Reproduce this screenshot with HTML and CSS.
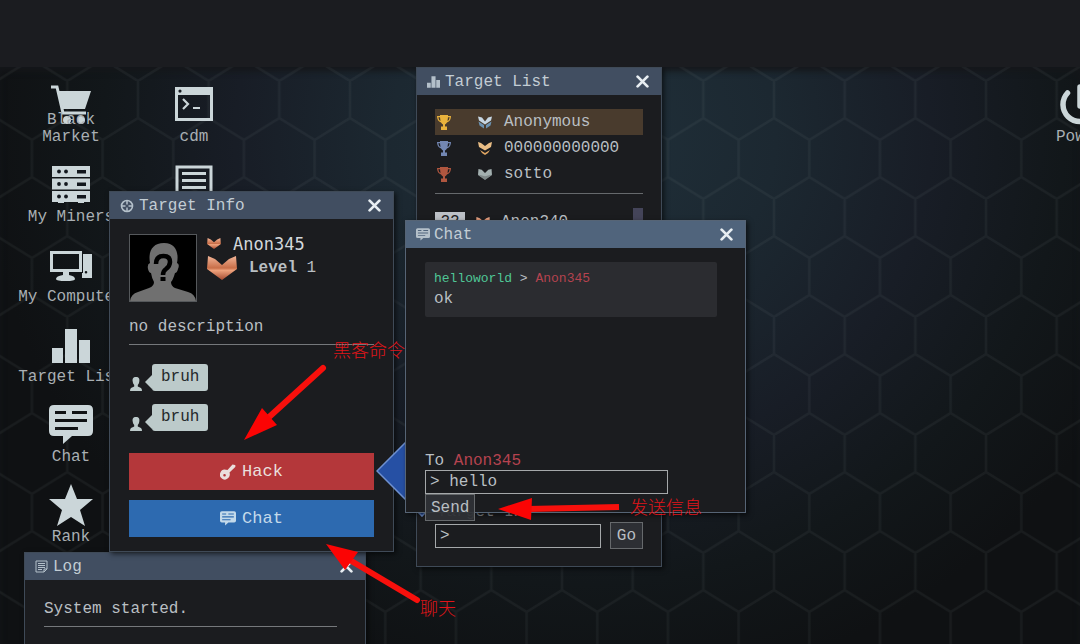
FILE: index.html
```html
<!DOCTYPE html>
<html lang="en">
<head>
	<meta charset="utf-8">
	<title>Desktop</title>
	<link rel="stylesheet" href="styles.css">
</head>
<body>
	<svg class="sprite" aria-hidden="true">
		<linearGradient id="copper" x1="0" y1="0" x2="0" y2="1">
			<stop offset="0" stop-color="#f2b497"/>
			<stop offset="0.5" stop-color="#c96f49"/>
			<stop offset="0.6" stop-color="#efa27c"/>
			<stop offset="1" stop-color="#a44a30"/>
		</linearGradient>
		<symbol id="i-chat" viewBox="0 0 44 40">
			<path fill="currentColor" fill-rule="evenodd" d="M5 0H39Q44 0 44 5V26Q44 31 39 31H23L14 39V31H5Q0 31 0 26V5Q0 0 5 0ZM6 6V9H17V6ZM23 6V9H38V6ZM6 14V17H38V14ZM6 22V25H29V22Z"/>
		</symbol>
		<symbol id="i-bars" viewBox="0 0 38 34">
			<path fill="currentColor" d="M0 19H11V34H0ZM13 0H25V34H13ZM27 11H38V34H27Z"/>
		</symbol>
		<symbol id="i-aim" viewBox="0 0 14 14">
			<g fill="none" stroke="currentColor"><circle cx="7" cy="7" r="5.500" stroke-width="1.600"/><path d="M7 1V5.500M7 8.500V13M1 7H5.500M8.500 7H13" stroke-width="1.500"/></g>
		</symbol>
		<symbol id="i-log" viewBox="0 0 13 13">
			<path fill="none" stroke="currentColor" d="M1 1H12V9L9 12H1ZM12 9H9V12M3 3.500H10M3 5.500H10M3 7.500H10M3 9.500H7"/>
		</symbol>
		<symbol id="i-close" viewBox="0 0 12 12">
			<path d="M1.500 1.500L10.500 10.500M10.500 1.500L1.500 10.500" stroke="currentColor" stroke-width="2.500" stroke-linecap="round"/>
		</symbol>
		<symbol id="i-user" viewBox="0 0 12 14">
			<path fill="currentColor" d="M6 0C9 0 9.800 2 9.300 4.500C9 6.500 8.500 7 7.800 8V9.500L11 11Q12 12 12 14H0Q0 12 1 11L4.200 9.500V8C3.500 7 3 6.500 2.700 4.500C2.200 2 3 0 6 0Z"/>
		</symbol>
		<symbol id="i-key" viewBox="0 0 16 16">
			<path fill="currentColor" fill-rule="evenodd" d="M12.500 0.500L15 1Q16 2 15 3.200L9.500 8.500Q10.500 11.500 8.500 13.800A4.900 4.900 0 1 1 6 5.800L7.500 6ZM4.500 10A1.300 1.300 0 1 0 4.600 12.600A1.300 1.300 0 1 0 4.500 10Z"/>
		</symbol>
		<symbol id="i-cup" viewBox="0 0 14 15">
			<path fill="currentColor" d="M3 0H11V1H14Q14 6 10 7.500Q9 9 8 9.500V11.500H10V15H4V11.500H6V9.500Q5 9 4 7.500Q0 6 0 1H3ZM1.300 2.300Q1.500 5 3.500 6L3 2.300ZM12.700 2.300H11L10.500 6Q12.500 5 12.700 2.300Z"/>
		</symbol>
		<symbol id="i-mask" viewBox="0 0 30 24">
			<path fill="currentColor" d="M1 0L8 2L15 9L22 2L29 0L30 13L15 24L0 13Z"/>
			<path fill="#000" fill-opacity="0.22" d="M0 12L15 16L30 12L15 24Z"/>
		</symbol>
		<symbol id="i-copper" viewBox="0 0 30 24">
			<path fill="url(#copper)" d="M1 0L8 3L15 9L22 3L29 0L30 13L15 24L0 13Z"/>
		</symbol>
		<symbol id="i-wings" viewBox="0 0 14 12">
			<path fill="#c7d7e4" d="M0 0L4 1L7 5L10 1L14 0L13 4L7 8L1 4Z"/>
			<path fill="#6c93b3" d="M0.500 5L6 8.500V12L1.500 9ZM13.500 5L8 8.500V12L12.500 9Z"/>
		</symbol>
		<symbol id="i-gold" viewBox="0 0 14 13">
			<path fill="#e9bd85" d="M0 0L3 1L7 4L11 1L14 0L13 5L7 8.500L1 5Z"/>
			<path fill="#e0a663" d="M2 8L7 11L12 8L10 11L7 13L4 11Z"/>
		</symbol>
	</svg>

	<header class="topbar"></header>

	<main class="desktop">
		<svg class="wallpaper" aria-hidden="true">
			<defs>
				<pattern id="hex" x="67.3" y="14" width="70.67" height="118" patternUnits="userSpaceOnUse">
					<path d="M0 0V37L35.300 59V96L0 118M35.300 96L70.670 118M35.300 59L70.670 37V0" fill="none" stroke="#8a9499" stroke-opacity="0.08" stroke-width="2.500"/>
				</pattern>
			</defs>
			<rect width="100%" height="100%" fill="url(#hex)"/>
		</svg>

		<nav class="shortcuts">
			<a class="shortcut" href="#market">
				<svg width="40" height="40" viewBox="0 0 40 40"><path d="M0 3H6L12 29H35" fill="none" stroke="currentColor" stroke-width="3"/><path fill="currentColor" d="M7 7H40L34 25H12Z"/><circle cx="16" cy="36" r="4" fill="currentColor"/><circle cx="30" cy="36" r="4" fill="currentColor"/></svg>
				<span>Black Market</span>
			</a>
			<a class="shortcut" href="#cdm">
				<svg width="38" height="40" viewBox="0 0 38 40"><path fill="currentColor" fill-rule="evenodd" d="M0 3H38V37H0ZM3 11V34H35V11ZM5 5.500A1.600 1.600 0 1 0 5 8.700A1.600 1.600 0 1 0 5 5.500Z"/><path d="M8 15L13 20L8 25M18 24H25" fill="none" stroke="currentColor" stroke-width="2.200"/></svg>
				<span>cdm</span>
			</a>
			<a class="shortcut" href="#miners">
				<svg width="38" height="40" viewBox="0 0 38 40"><path fill="currentColor" d="M0 2H38V13H0ZM0 14.500H38V25.500H0ZM0 27H38V38H32V39H26V38H12V39H6V38H0Z"/><g fill="#12171d"><circle cx="7" cy="7.500" r="1.900"/><circle cx="14" cy="7.500" r="1.900"/><path d="M25 6H34V9.500H25ZM25 18.500H34V22H25ZM25 31H34V34.500H25Z"/><circle cx="7" cy="20" r="1.900"/><circle cx="14" cy="20" r="1.900"/><circle cx="7" cy="32.500" r="1.900"/><circle cx="14" cy="32.500" r="1.900"/></g></svg>
				<span>My Miners</span>
			</a>
			<a class="shortcut" href="#log">
				<svg width="38" height="40" viewBox="0 0 38 40"><path d="M2 3H36V37H2ZM7 9.500H31M7 16.500H31M7 23.500H31M7 30H22" fill="none" stroke="currentColor" stroke-width="3"/></svg>
				<span>Log</span>
			</a>
			<a class="shortcut" href="#computer">
				<svg width="44" height="40" viewBox="0 0 44 40"><path fill="currentColor" fill-rule="evenodd" d="M1 7H33V28H20V31Q26 32 26 35Q26 37 17 37Q7 37 7 35Q7 32 14 31V28H1ZM4 10V25H30V10ZM34 10H43V34H33V29H34ZM37 27A1.300 1.300 0 1 0 37 29.600A1.300 1.300 0 1 0 37 27Z"/></svg>
				<span>My Computer</span>
			</a>
			<a class="shortcut row-start" href="#targets">
				<svg width="38" height="40" viewBox="0 -5 38 40"><use href="#i-bars" width="38" height="34"/></svg>
				<span>Target List</span>
			</a>
			<a class="shortcut row-start" href="#chat">
				<svg width="44" height="40" viewBox="0 -1 44 40"><use href="#i-chat" width="44" height="40"/></svg>
				<span>Chat</span>
			</a>
			<a class="shortcut row-start" href="#rank">
				<svg width="44" height="42" viewBox="0 0 44 42"><path fill="currentColor" d="M22 0L28 15H44L31 26L36 42L22 33L8 42L13 26L0 15H16Z"/></svg>
				<span>Rank</span>
			</a>
		</nav>

		<a class="shortcut power" href="#power">
			<svg width="42" height="42" viewBox="0 0 42 42"><path d="M8.500 9A17 17 0 1 0 33.500 9M21 3V22" fill="none" stroke="currentColor" stroke-width="5.500" stroke-linecap="round"/></svg>
			<span>Power</span>
		</a>

		<section class="window targets">
			<div class="titlebar">
				<svg width="13" height="12"><use href="#i-bars"/></svg>
				<h2>Target List</h2>
				<button class="close" type="button" aria-label="Close"><svg width="13" height="13"><use href="#i-close"/></svg></button>
			</div>
			<div class="content">
				<ol class="podium">
					<li class="first"><svg class="gold" width="14" height="15"><use href="#i-cup"/></svg><svg width="14" height="13"><use href="#i-wings"/></svg><span>Anonymous</span></li>
					<li><svg class="silver" width="14" height="15"><use href="#i-cup"/></svg><svg width="14" height="13"><use href="#i-gold"/></svg><span>000000000000</span></li>
					<li><svg class="bronze" width="14" height="15"><use href="#i-cup"/></svg><svg class="steel" width="14" height="13"><use href="#i-mask"/></svg><span>sotto</span></li>
				</ol>
				<div class="ranking">
					<ul>
						<li><span class="level">22</span><svg width="14" height="13"><use href="#i-copper"/></svg><span>Anon340</span></li>
					</ul>
					<div class="scroll"></div>
				</div>
				<form>
					<label for="target">Target IP</label>
					<div class="field">
						<input id="target" type="text" value="&gt;">
						<button class="small" type="button">Go</button>
					</div>
				</form>
			</div>
		</section>

		<section class="window log">
			<div class="titlebar">
				<svg width="13" height="13"><use href="#i-log"/></svg>
				<h2>Log</h2>
				<button class="close" type="button" aria-label="Close"><svg width="13" height="13"><use href="#i-close"/></svg></button>
			</div>
			<div class="content">
				<p>System started.</p>
			</div>
		</section>

		<section class="window info">
			<div class="titlebar">
				<svg width="14" height="14"><use href="#i-aim"/></svg>
				<h2>Target Info</h2>
				<button class="close" type="button" aria-label="Close"><svg width="13" height="13"><use href="#i-close"/></svg></button>
			</div>
			<div class="content">
				<div class="profile">
					<svg class="avatar" viewBox="0 0 66 66" role="img" aria-label="Avatar">
						<path fill="#707070" d="M34 8C46 8 49 18 47 28Q50 29 48 34Q47 38 45 38Q43 45 41 47Q41 51 45 53L58 57Q65 59 66 66H0Q1 59 8 57L19 53Q24 51 24 47Q22 44 21 38Q19 38 18 34Q17 29 20 28C18 17 22 8 34 8Z"/>
						<path fill="none" stroke="#000" stroke-width="4.500" d="M26 29Q26 21 33.500 21Q40 21 40 27Q40 31 36 34Q33 36 33 40"/>
						<rect x="30.500" y="42" width="5" height="4"/>
					</svg>
					<div class="who">
						<div class="name"><svg width="14" height="11"><use href="#i-copper"/></svg><b>Anon345</b></div>
						<div class="rank"><svg width="30" height="24"><use href="#i-copper"/></svg><span><b>Level</b> 1</span></div>
					</div>
				</div>
				<p>no description</p>
				<div class="bubbles">
					<div class="bubble"><svg width="12" height="14"><use href="#i-user"/></svg><span>bruh</span></div>
					<div class="bubble"><svg width="12" height="14"><use href="#i-user"/></svg><span>bruh</span></div>
				</div>
				<div class="actions">
					<button class="hack" type="button"><svg width="16" height="16"><use href="#i-key"/></svg>Hack</button>
					<button class="talk" type="button"><svg width="16" height="15"><use href="#i-chat"/></svg>Chat</button>
				</div>
			</div>
		</section>

		<svg class="pointer" width="92" height="92" aria-hidden="true"><path d="M1 46L46 1L91 46L46 91Z" fill="#2650a4" stroke="#6f90cf" stroke-width="1.500"/></svg>

		<section class="window chat">
			<div class="titlebar">
				<svg width="14" height="13"><use href="#i-chat"/></svg>
				<h2>Chat</h2>
				<button class="close" type="button" aria-label="Close"><svg width="13" height="13"><use href="#i-close"/></svg></button>
			</div>
			<div class="content">
				<div class="messages">
					<div class="message">
						<div class="meta"><span class="from">helloworld</span> &gt; <span class="to">Anon345</span></div>
						<div>ok</div>
					</div>
				</div>
				<form>
					<label for="message">To <span class="to">Anon345</span></label>
					<input id="message" type="text" value="&gt; hello">
					<button class="small" type="button">Send</button>
				</form>
			</div>
		</section>

		<svg class="arrows" aria-hidden="true">
			<g fill="none" stroke="#f8100c" stroke-width="6" stroke-linecap="round">
				<path d="M323 301L268 351"/>
				<path d="M619 440L528 442" stroke-linecap="butt"/>
				<path d="M417 533L348 492"/>
			</g>
			<path fill="#fb0404" d="M244 373L262 341L277 358ZM498 442L532 431L531 453ZM326 477L358 485L345 503Z"/>
		</svg>
		<span class="note note-hack" lang="zh">黑客命令</span>
		<span class="note note-send" lang="zh">发送信息</span>
		<span class="note note-chat" lang="zh">聊天</span>
	</main>
</body>
</html>
```
FILE: styles.css
```css
*{
	box-sizing: border-box;
}
body{
	margin: 0;
	min-height: 100vh;
	display: flex;
	flex-direction: column;
	background-color: #1b1c20;
	color: #b9bfc3;
	font-family: "Liberation Mono", "Noto Sans CJK SC", monospace;
	font-size: 16px;
	line-height: 20px;
}
svg{
	flex: none;
	display: block;
}
h2, p, ol, ul{
	margin: 0;
	padding: 0;
	font-size: 16px;
	font-weight: normal;
	list-style: none;
}
button, input{
	font: inherit;
	color: inherit;
	margin: 0;
	border-radius: 0;
}
.sprite{
	position: absolute;
	width: 0;
	height: 0;
}
.topbar{
	height: 67px;
}
.desktop{
	position: relative;
	flex: 1;
	overflow: hidden;
	background: radial-gradient(ellipse 600px 560px at 54% 12%, #20303a 0%, #1c2831 32%, #181d26 58%, #12171a 80%, #0f1113 100%);
	box-shadow: inset 0 4px 6px #15171a;
}
.wallpaper, .arrows{
	position: absolute;
	top: 0;
	left: 0;
	width: 100%;
	height: 100%;
	pointer-events: none;
}

/* desktop icons */
.shortcuts{
	position: relative;
	display: grid;
	grid-template-columns: 106px 106px;
	grid-auto-rows: 62px;
	gap: 18px 17px;
	padding: 17px 18px;
}
.shortcut{
	display: grid;
	justify-items: center;
	height: 62px;
	color: #cbd6d9;
	text-decoration: none;
	text-align: center;
	line-height: 17px;
}
.shortcut svg, .shortcut span{
	grid-area: 1 / 1;
}
.shortcut span{
	align-self: end;
	color: #a9afb3;
}
.row-start{
	grid-column: 1;
}
.power{
	position: absolute;
	top: 17px;
	right: -53px;
	width: 106px;
}

/* windows */
.window{
	position: absolute;
	display: flex;
	flex-direction: column;
	background-color: #1b1c1f;
	border: 1px solid #3f4a57;
	box-shadow: 2px 2px 5px rgba(0,0,0,0.6);
}
.titlebar{
	display: flex;
	flex: none;
	align-items: center;
	gap: 5px;
	height: 27px;
	padding: 0 12px 0 10px;
	background-color: #414e61;
	color: #b4c0ca;
}
.titlebar h2{
	flex: 1;
	color: #c3cdd4;
}
.close{
	padding: 0;
	border: none;
	background: none;
	color: #e8eef2;
}
.content{
	flex: 1;
	padding: 14px 19px;
}
.window p{
	padding-bottom: 7px;
	border-bottom: 1px solid #75787b;
}
.small{
	height: 27px;
	padding: 0 5px;
	border: 1px solid #66696c;
	background-color: rgba(48,50,54,0.9);
}
input{
	display: block;
	width: 100%;
	height: 24px;
	padding: 0 4px;
	border: 1px solid #a5a8aa;
	background-color: #1b1c1f;
	outline: none;
}

.targets{
	top: 0;
	left: 416px;
	width: 246px;
}
.targets .content{
	padding: 14px 18px 17px;
}
.podium{
	padding-bottom: 6px;
	border-bottom: 1px solid #66696c;
}
.podium li{
	display: flex;
	align-items: center;
	height: 26px;
	padding-left: 2px;
}
.podium li svg + svg{
	margin: 0 12px 0 27px;
}
.podium .first{
	background-color: #493b2d;
}
.gold{
	color: #e9b23c;
}
.silver{
	color: #7387b3;
}
.bronze{
	color: #b0563f;
}
.steel{
	color: #a3b0b0;
}
.ranking{
	display: flex;
	justify-content: space-between;
	height: 291px;
	margin-top: 18px;
}
.ranking li{
	display: flex;
	align-items: center;
	gap: 11px;
	height: 20px;
}
.level{
	width: 30px;
	background-color: #bcc0c6;
	color: #1b1c1f;
	text-align: center;
}
.scroll{
	width: 10px;
	height: 60px;
	margin-top: -4px;
	background-color: #444459;
}
.targets label{
	display: block;
	padding-left: 2px;
	line-height: 19px;
	color: #85888b;
}
.field{
	display: flex;
	align-items: center;
	gap: 9px;
}
.field input{
	flex: 1;
	min-width: 0;
}
.field .small{
	padding: 0 6px;
}

.log{
	top: 485px;
	left: 24px;
	width: 342px;
	height: 200px;
}
.log .content{
	padding: 19px 28px 19px 19px;
}

.info{
	top: 124px;
	left: 109px;
	width: 285px;
}
.info .content{
	padding-top: 15px;
}
.profile{
	display: flex;
	gap: 10px;
	margin-bottom: 15px;
}
.avatar{
	width: 68px;
	height: 68px;
	background-color: #000;
	border: 1px solid #55585b;
}
.name, .rank{
	display: flex;
	align-items: center;
	height: 19px;
	gap: 12px;
}
.name b{
	font-family: "DejaVu Sans Mono", monospace;
	font-size: 17px;
	font-weight: normal;
	color: #d3d8db;
}
.rank{
	height: 30px;
}
.bubbles{
	display: flex;
	flex-direction: column;
	gap: 13px;
	margin: 19px 0 22px;
}
.bubble{
	display: flex;
	align-items: flex-end;
	gap: 10px;
	padding-left: 1px;
	color: #bccaca;
}
.bubble span{
	position: relative;
	height: 27px;
	padding: 0 9px;
	line-height: 27px;
	border-radius: 3px;
	background-color: #bccaca;
	color: #25292b;
}
.bubble span::before{
	content: "";
	position: absolute;
	left: -7px;
	top: 11px;
	border: 7px solid transparent;
	border-left: none;
	border-right-color: #bccaca;
}
.actions{
	display: flex;
	flex-direction: column;
	gap: 10px;
}
.actions button{
	display: flex;
	align-items: center;
	justify-content: center;
	gap: 6px;
	height: 37px;
	border: none;
	font-size: 17px;
	color: #eadfdd;
}
.actions .hack{
	background-color: #b4373a;
}
.actions .talk{
	background-color: #2d6ab0;
	color: #c3d9ea;
}

.pointer{
	position: absolute;
	top: 358px;
	left: 376px;
}

.chat{
	top: 153px;
	left: 405px;
	width: 341px;
	height: 293px;
	border-color: #566475;
}
.chat .titlebar{
	gap: 4px;
	background-color: #50647c;
}
.messages{
	height: 190px;
}
.message{
	margin-right: 9px;
	padding: 7px 9px 8px;
	border-radius: 2px;
	background-color: #2b2c30;
}
.meta{
	font-size: 13px;
}
.from{
	color: #4fc796;
}
.to{
	color: #b5434f;
}
.chat label{
	display: block;
	line-height: 18px;
}
.chat input{
	width: 243px;
}
.chat .small{
	display: block;
}

/* red marks over everything */
.note{
	position: absolute;
	font-family: "Noto Sans CJK SC", sans-serif;
	font-size: 18px;
	font-weight: 300;
	color: #e0151a;
}
.note-hack{
	top: 272px;
	left: 333px;
}
.note-send{
	top: 429px;
	left: 630px;
}
.note-chat{
	top: 530px;
	left: 420px;
}
```
